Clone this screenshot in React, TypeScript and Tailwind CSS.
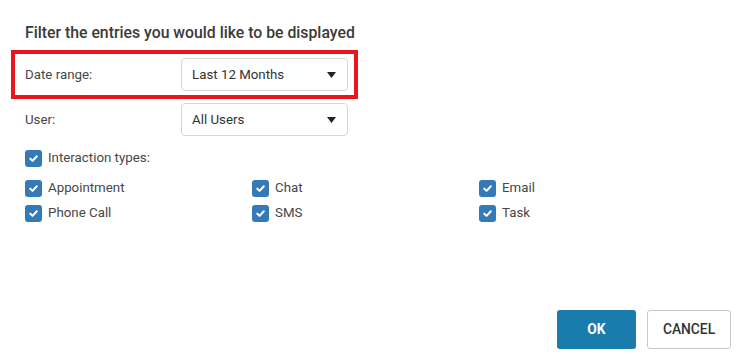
function Check({ label }: { label: string }) {
  return (
    <label className="flex items-center h-[20px] gap-[6px] text-[13.3px] text-[#474747]">
      <span className="w-[17px] h-[17px] rounded-[3px] bg-[#337ab7] flex items-center justify-center shrink-0">
        <svg width="11" height="11" viewBox="0 0 12 12" fill="none">
          <path d="M2.5 6.2 L5 8.6 L9.6 3.6" stroke="white" strokeWidth="2.2" strokeLinecap="round" strokeLinejoin="round" />
        </svg>
      </span>
      {label}
    </label>
  );
}

function Select({ value }: { value: string }) {
  return (
    <div className="w-[167px] h-[33px] border border-[#d6d6d6] rounded-[4px] flex items-center justify-between pl-[10px] pr-[11px] text-[13.3px] text-[#333] bg-white">
      <span>{value}</span>
      <svg width="9" height="6" viewBox="0 0 9 6">
        <path d="M0 0 H9 L4.5 6 Z" fill="#222" />
      </svg>
    </div>
  );
}

export default function App() {
  return (
    <div
      className="w-[745px] h-[360px] bg-white flex flex-col"
      style={{ fontFamily: "Roboto, 'Liberation Sans', sans-serif" }}
    >
      <div className="pl-[25px] pt-[23px]">
        <h2 className="text-[15.8px] leading-[20px] font-medium text-[#3a3a3a]">
          Filter the entries you would like to be displayed
        </h2>

        <div className="mt-[7px] -ml-[14px] w-[347px] border-4 border-[#e8161f] flex items-center pl-[10px] pr-[6px] py-[4px]">
          <span className="w-[156px] text-[13.3px] text-[#474747]">Date range:</span>
          <Select value="Last 12 Months" />
        </div>

        <div className="mt-[4px] flex items-center">
          <span className="w-[156px] text-[13.3px] text-[#474747]">User:</span>
          <Select value="All Users" />
        </div>

        <div className="mt-[12px]">
          <Check label="Interaction types:" />
        </div>

        <div className="mt-[10px] grid grid-cols-[227px_227px_227px] gap-y-[5px]">
          <Check label="Appointment" />
          <Check label="Chat" />
          <Check label="Email" />
          <Check label="Phone Call" />
          <Check label="SMS" />
          <Check label="Task" />
        </div>
      </div>

      <div className="flex-1" />

      <div className="flex justify-end gap-[11px] pr-[14px] pb-[11px]">
        <button className="w-[79px] h-[39px] rounded-[3px] bg-[#1a7bad] text-white text-[13.8px] font-bold">
          OK
        </button>
        <button className="w-[84px] h-[39px] rounded-[3px] border border-[#c8c8c8] bg-white text-[#333] text-[13.8px] font-medium">
          CANCEL
        </button>
      </div>
    </div>
  );
}
